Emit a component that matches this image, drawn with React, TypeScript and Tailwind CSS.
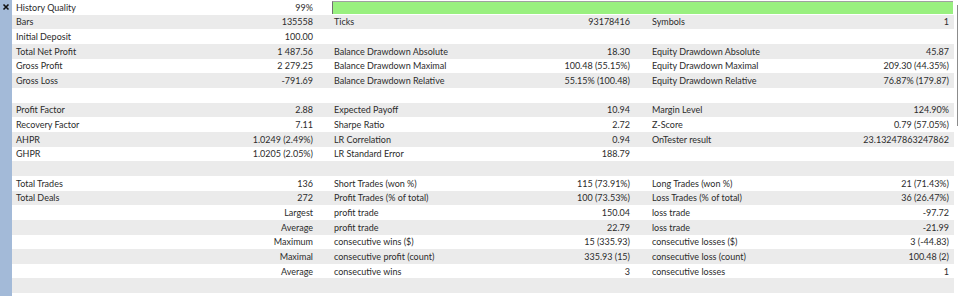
import React from 'react';

type Cell = [string, string];
type Row = [Cell, Cell | 'bar', Cell];

const E: Cell = ['', ''];

const rows: Row[] = [
    [['History Quality', '99%'], 'bar', E],
    [['Bars', '135558'], ['Ticks', '93178416'], ['Symbols', '1']],
    [['Initial Deposit', '100.00'], E, E],
    [['Total Net Profit', '1 487.56'], ['Balance Drawdown Absolute', '18.30'], ['Equity Drawdown Absolute', '45.87']],
    [['Gross Profit', '2 279.25'], ['Balance Drawdown Maximal', '100.48 (55.15%)'], ['Equity Drawdown Maximal', '209.30 (44.35%)']],
    [['Gross Loss', '-791.69'], ['Balance Drawdown Relative', '55.15% (100.48)'], ['Equity Drawdown Relative', '76.87% (179.87)']],
    [E, E, E],
    [['Profit Factor', '2.88'], ['Expected Payoff', '10.94'], ['Margin Level', '124.90%']],
    [['Recovery Factor', '7.11'], ['Sharpe Ratio', '2.72'], ['Z-Score', '0.79 (57.05%)']],
    [['AHPR', '1.0249 (2.49%)'], ['LR Correlation', '0.94'], ['OnTester result', '23.13247863247862']],
    [['GHPR', '1.0205 (2.05%)'], ['LR Standard Error', '188.79'], E],
    [E, E, E],
    [['Total Trades', '136'], ['Short Trades (won %)', '115 (73.91%)'], ['Long Trades (won %)', '21 (71.43%)']],
    [['Total Deals', '272'], ['Profit Trades (% of total)', '100 (73.53%)'], ['Loss Trades (% of total)', '36 (26.47%)']],
    [['', 'Largest'], ['profit trade', '150.04'], ['loss trade', '-97.72']],
    [['', 'Average'], ['profit trade', '22.79'], ['loss trade', '-21.99']],
    [['', 'Maximum'], ['consecutive wins ($)', '15 (335.93)'], ['consecutive losses ($)', '3 (-44.83)']],
    [['', 'Maximal'], ['consecutive profit (count)', '335.93 (15)'], ['consecutive loss (count)', '100.48 (2)']],
    [['', 'Average'], ['consecutive wins', '3'], ['consecutive losses', '1']],
    [E, E, E],
    [E, E, E],
];

export default function App() {
    return (
        <div
            className="relative flex w-[960px] h-[296px] overflow-hidden bg-white text-[#2b2b2b] text-[9px]"
            style={{ fontFamily: 'Lato, "Noto Sans", sans-serif' }}
        >
            {/* Side strip */}
            <div className="w-[12px] shrink-0 bg-[#a3bad8] flex justify-center pt-[2px]">
                <svg width="8" height="8" viewBox="0 0 8 8" className="mt-[1px]">
                    <path d="M1.5 1.5 L6.5 6.5 M6.5 1.5 L1.5 6.5" stroke="#111" strokeWidth="1.6" />
                </svg>
            </div>

            {/* Table */}
            <div className="w-[942px] shrink-0 flex flex-col">
                {rows.map((row, i) => (
                    <div
                        key={i}
                        className={`h-[14.667px] shrink-0 grid grid-cols-[309px_318px_315px] items-center leading-none ${
                            i % 2 === 1 ? 'bg-[#ebebeb]' : 'bg-white'
                        }`}
                    >
                        <div className="flex justify-between pl-[4px] pr-[8px]">
                            <span>{row[0][0]}</span>
                            <span>{row[0][1]}</span>
                        </div>
                        {row[1] === 'bar' ? (
                            <div className="col-span-2 h-full pl-[11px] pt-[1px] pb-[1px] pr-[1px]">
                                <div className="h-full bg-[#99f07f] border-t border-t-[#a0a0a0] border-l border-l-[#707070]" />
                            </div>
                        ) : (
                            <>
                                <div className="flex justify-between pl-[13px] pr-[9px]">
                                    <span>{row[1][0]}</span>
                                    <span>{row[1][1]}</span>
                                </div>
                                <div className="flex justify-between pl-[13px] pr-[5px]">
                                    <span>{row[2][0]}</span>
                                    <span>{row[2][1]}</span>
                                </div>
                            </>
                        )}
                    </div>
                ))}
            </div>

            {/* Scrollbar */}
            <div className="flex-1 relative bg-white">
                <div className="absolute left-[3px] top-[5px] w-[1px] h-[121px] bg-[#8c8c8c]" />
            </div>
        </div>
    );
}
